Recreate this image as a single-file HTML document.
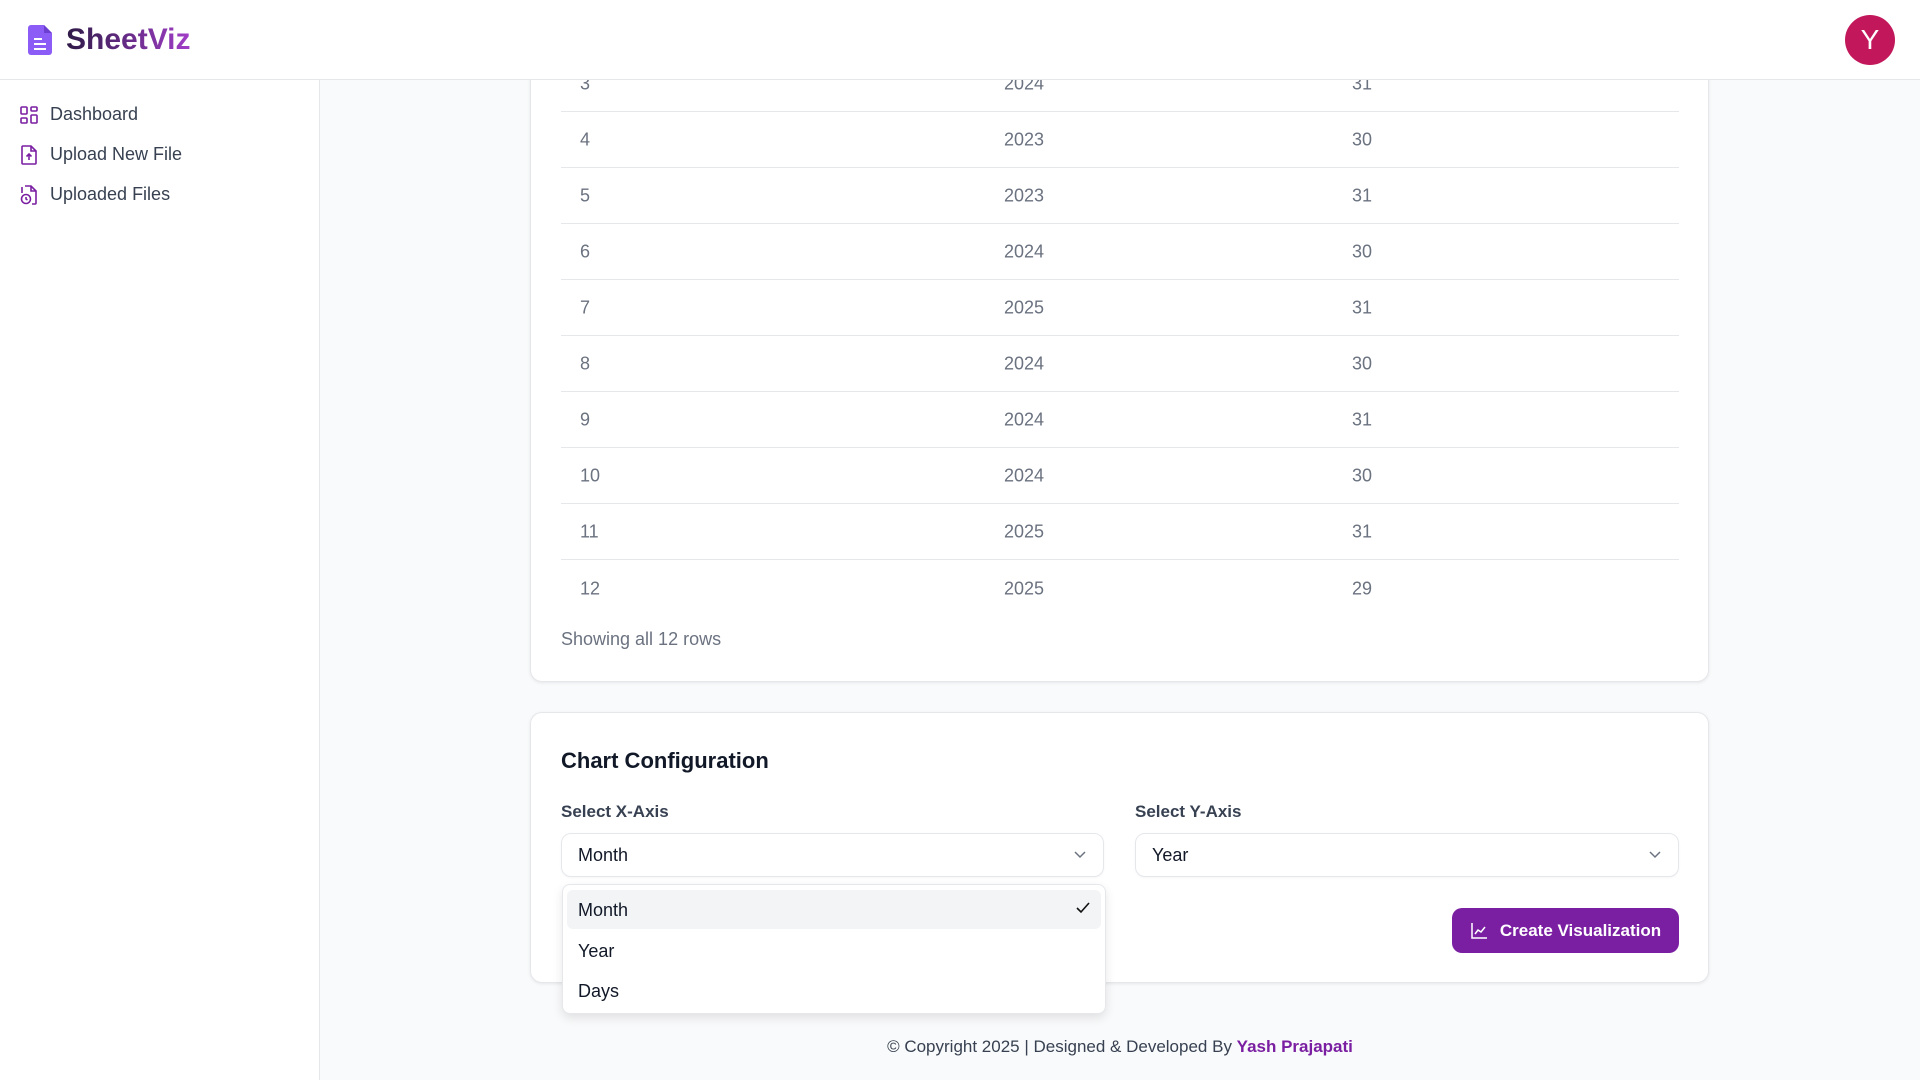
<!DOCTYPE html>
<html><head><meta charset="utf-8"><style>
*{box-sizing:border-box;margin:0;padding:0}
body{width:1920px;height:1080px;overflow:hidden;background:#f9fafb;font-family:"Liberation Sans",sans-serif;position:relative;color:#111827}
.abs{position:absolute}
.header{left:0;top:0;width:1920px;height:80px;background:#fff;border-bottom:1px solid #e5e7eb;z-index:5}
.side{left:0;top:80px;width:320px;height:1000px;background:#fff;border-right:1px solid #e5e7eb}
.nav{left:20px;display:flex;align-items:center;font-size:18px;color:#374151}
.nav svg{margin-right:12px}
.card{background:#fff;border:1px solid #e5e7eb;border-radius:12px;box-shadow:0 1px 3px rgba(0,0,0,.08)}
.row{left:561px;width:1118px;height:56px;border-bottom:1px solid #e5e7eb;font-size:18px;color:#6b7280}
.row span{position:absolute;top:51%;transform:translateY(-50%)}
.sel{height:44px;border:1px solid #e5e7eb;border-radius:10px;background:#fff;font-size:18px;color:#111827;padding-left:16px;line-height:42px;box-shadow:0 1px 2px rgba(0,0,0,.04)}
.sel svg{position:absolute;right:16px;top:15px}
.lbl{font-size:17px;font-weight:bold;color:#374151}
</style></head><body>
<div class="abs side"></div>
<div class="abs card" style="left:530px;top:-20px;width:1179px;height:702px"></div>
<div class="abs row" style="top:56px"><span style="left:19px">3</span><span style="left:443px">2024</span><span style="left:791px">31</span></div>
<div class="abs row" style="top:112px"><span style="left:19px">4</span><span style="left:443px">2023</span><span style="left:791px">30</span></div>
<div class="abs row" style="top:168px"><span style="left:19px">5</span><span style="left:443px">2023</span><span style="left:791px">31</span></div>
<div class="abs row" style="top:224px"><span style="left:19px">6</span><span style="left:443px">2024</span><span style="left:791px">30</span></div>
<div class="abs row" style="top:280px"><span style="left:19px">7</span><span style="left:443px">2025</span><span style="left:791px">31</span></div>
<div class="abs row" style="top:336px"><span style="left:19px">8</span><span style="left:443px">2024</span><span style="left:791px">30</span></div>
<div class="abs row" style="top:392px"><span style="left:19px">9</span><span style="left:443px">2024</span><span style="left:791px">31</span></div>
<div class="abs row" style="top:448px"><span style="left:19px">10</span><span style="left:443px">2024</span><span style="left:791px">30</span></div>
<div class="abs row" style="top:504px"><span style="left:19px">11</span><span style="left:443px">2025</span><span style="left:791px">31</span></div>
<div class="abs row" style="top:560px;border-bottom:none"><span style="left:19px">12</span><span style="left:443px">2025</span><span style="left:791px">29</span></div>
<div class="abs" style="left:561px;top:629px;font-size:18px;color:#6b7280">Showing all 12 rows</div>

<div class="abs card" style="left:530px;top:712px;width:1179px;height:271px"></div>
<div class="abs" style="left:561px;top:748px;font-size:22px;font-weight:bold;color:#111827">Chart Configuration</div>
<div class="abs lbl" style="left:561px;top:802px">Select X-Axis</div>
<div class="abs lbl" style="left:1135px;top:802px">Select Y-Axis</div>
<div class="abs sel" style="left:561px;top:833px;width:543px">Month<svg width="14" height="10" viewBox="0 0 14 10"><path d="M2 3l5 5 5-5" fill="none" stroke="#6b7280" stroke-width="1.5"/></svg></div>
<div class="abs sel" style="left:1135px;top:833px;width:544px">Year<svg width="14" height="10" viewBox="0 0 14 10"><path d="M2 3l5 5 5-5" fill="none" stroke="#6b7280" stroke-width="1.5"/></svg></div>
<div class="abs" style="left:1452px;top:908px;width:227px;height:45px;background:#7b1fa2;border-radius:10px;color:#fff;font-size:17px;font-weight:bold;display:flex;align-items:center;justify-content:center"><svg width="18" height="18" viewBox="0 0 18 18" style="margin-right:12px"><path d="M2 1v15h15M5 12l3-4 3 2 4-5" fill="none" stroke="#fff" stroke-width="1.5"/></svg>Create Visualization</div>

<div class="abs" style="left:562px;top:884px;width:544px;height:130px;background:#fff;border:1px solid #e5e7eb;border-radius:8px;box-shadow:0 4px 10px rgba(0,0,0,.1);z-index:3">
 <div class="abs" style="left:4px;top:5px;width:534px;height:39px;background:#f3f4f6;border-radius:6px"></div>
 <div class="abs" style="left:15px;top:15px;font-size:18px">Month</div>
 <svg class="abs" style="left:512px;top:16px" width="16" height="14" viewBox="0 0 16 14"><path d="M2 7l4 4 8-9" fill="none" stroke="#111" stroke-width="1.6"/></svg>
 <div class="abs" style="left:15px;top:56px;font-size:18px">Year</div>
 <div class="abs" style="left:15px;top:96px;font-size:18px">Days</div>
</div>

<div class="abs" style="left:320px;width:1600px;top:1037px;text-align:center;font-size:17px;color:#374151">© Copyright 2025 | Designed &amp; Developed By <span style="color:#7b1fa2;font-weight:bold">Yash Prajapati</span></div>

<div class="abs header">
 <svg class="abs" style="left:28px;top:25px" width="24" height="30" viewBox="0 0 24 30"><path d="M3 0h13l8 8v19a3 3 0 0 1-3 3H3a3 3 0 0 1-3-3V3a3 3 0 0 1 3-3z" fill="#8b5cf6"/><path d="M16 0v8h8z" fill="#6d3fd1"/><path d="M6 14h8M6 19h12M6 24h12" stroke="#fff" stroke-width="2"/></svg>
 <div class="abs" style="left:66px;top:23px;font-size:30px;font-weight:bold;background:linear-gradient(90deg,#2e1a47,#a23ec9);-webkit-background-clip:text;color:transparent">SheetViz</div>
 <div class="abs" style="left:1845px;top:15px;width:50px;height:50px;border-radius:50%;background:#c2185b;color:#fff;font-size:28px;text-align:center;line-height:50px">Y</div>
</div>

<div class="abs nav" style="top:104px"><svg width="18" height="18" viewBox="0 0 18 18" fill="none" stroke="#7b1fa2" stroke-width="1.6"><rect x="1" y="1" width="6" height="7" rx="1"/><rect x="11" y="1" width="6" height="4" rx="1"/><rect x="1" y="12" width="6" height="5" rx="1"/><rect x="11" y="9" width="6" height="8" rx="1"/></svg>Dashboard</div>
<div class="abs nav" style="top:144px"><svg width="18" height="20" viewBox="0 0 18 20" fill="none" stroke="#7b1fa2" stroke-width="1.6"><path d="M3 1h8l5 5v12a1 1 0 0 1-1 1H3a1 1 0 0 1-1-1V2a1 1 0 0 1 1-1zM11 1v5h5M9 15V9M6.5 11.5L9 9l2.5 2.5"/></svg>Upload New File</div>
<div class="abs nav" style="top:184px"><svg width="18" height="20" viewBox="0 0 18 20" fill="none" stroke="#7b1fa2" stroke-width="1.6"><path d="M5 1h6l5 5v12a1 1 0 0 1-1 1h-3M11 1v5h5M2 8V2"/><circle cx="6" cy="14" r="4.5"/><path d="M6 12v2l1.5 1"/></svg>Uploaded Files</div>
</body></html>
